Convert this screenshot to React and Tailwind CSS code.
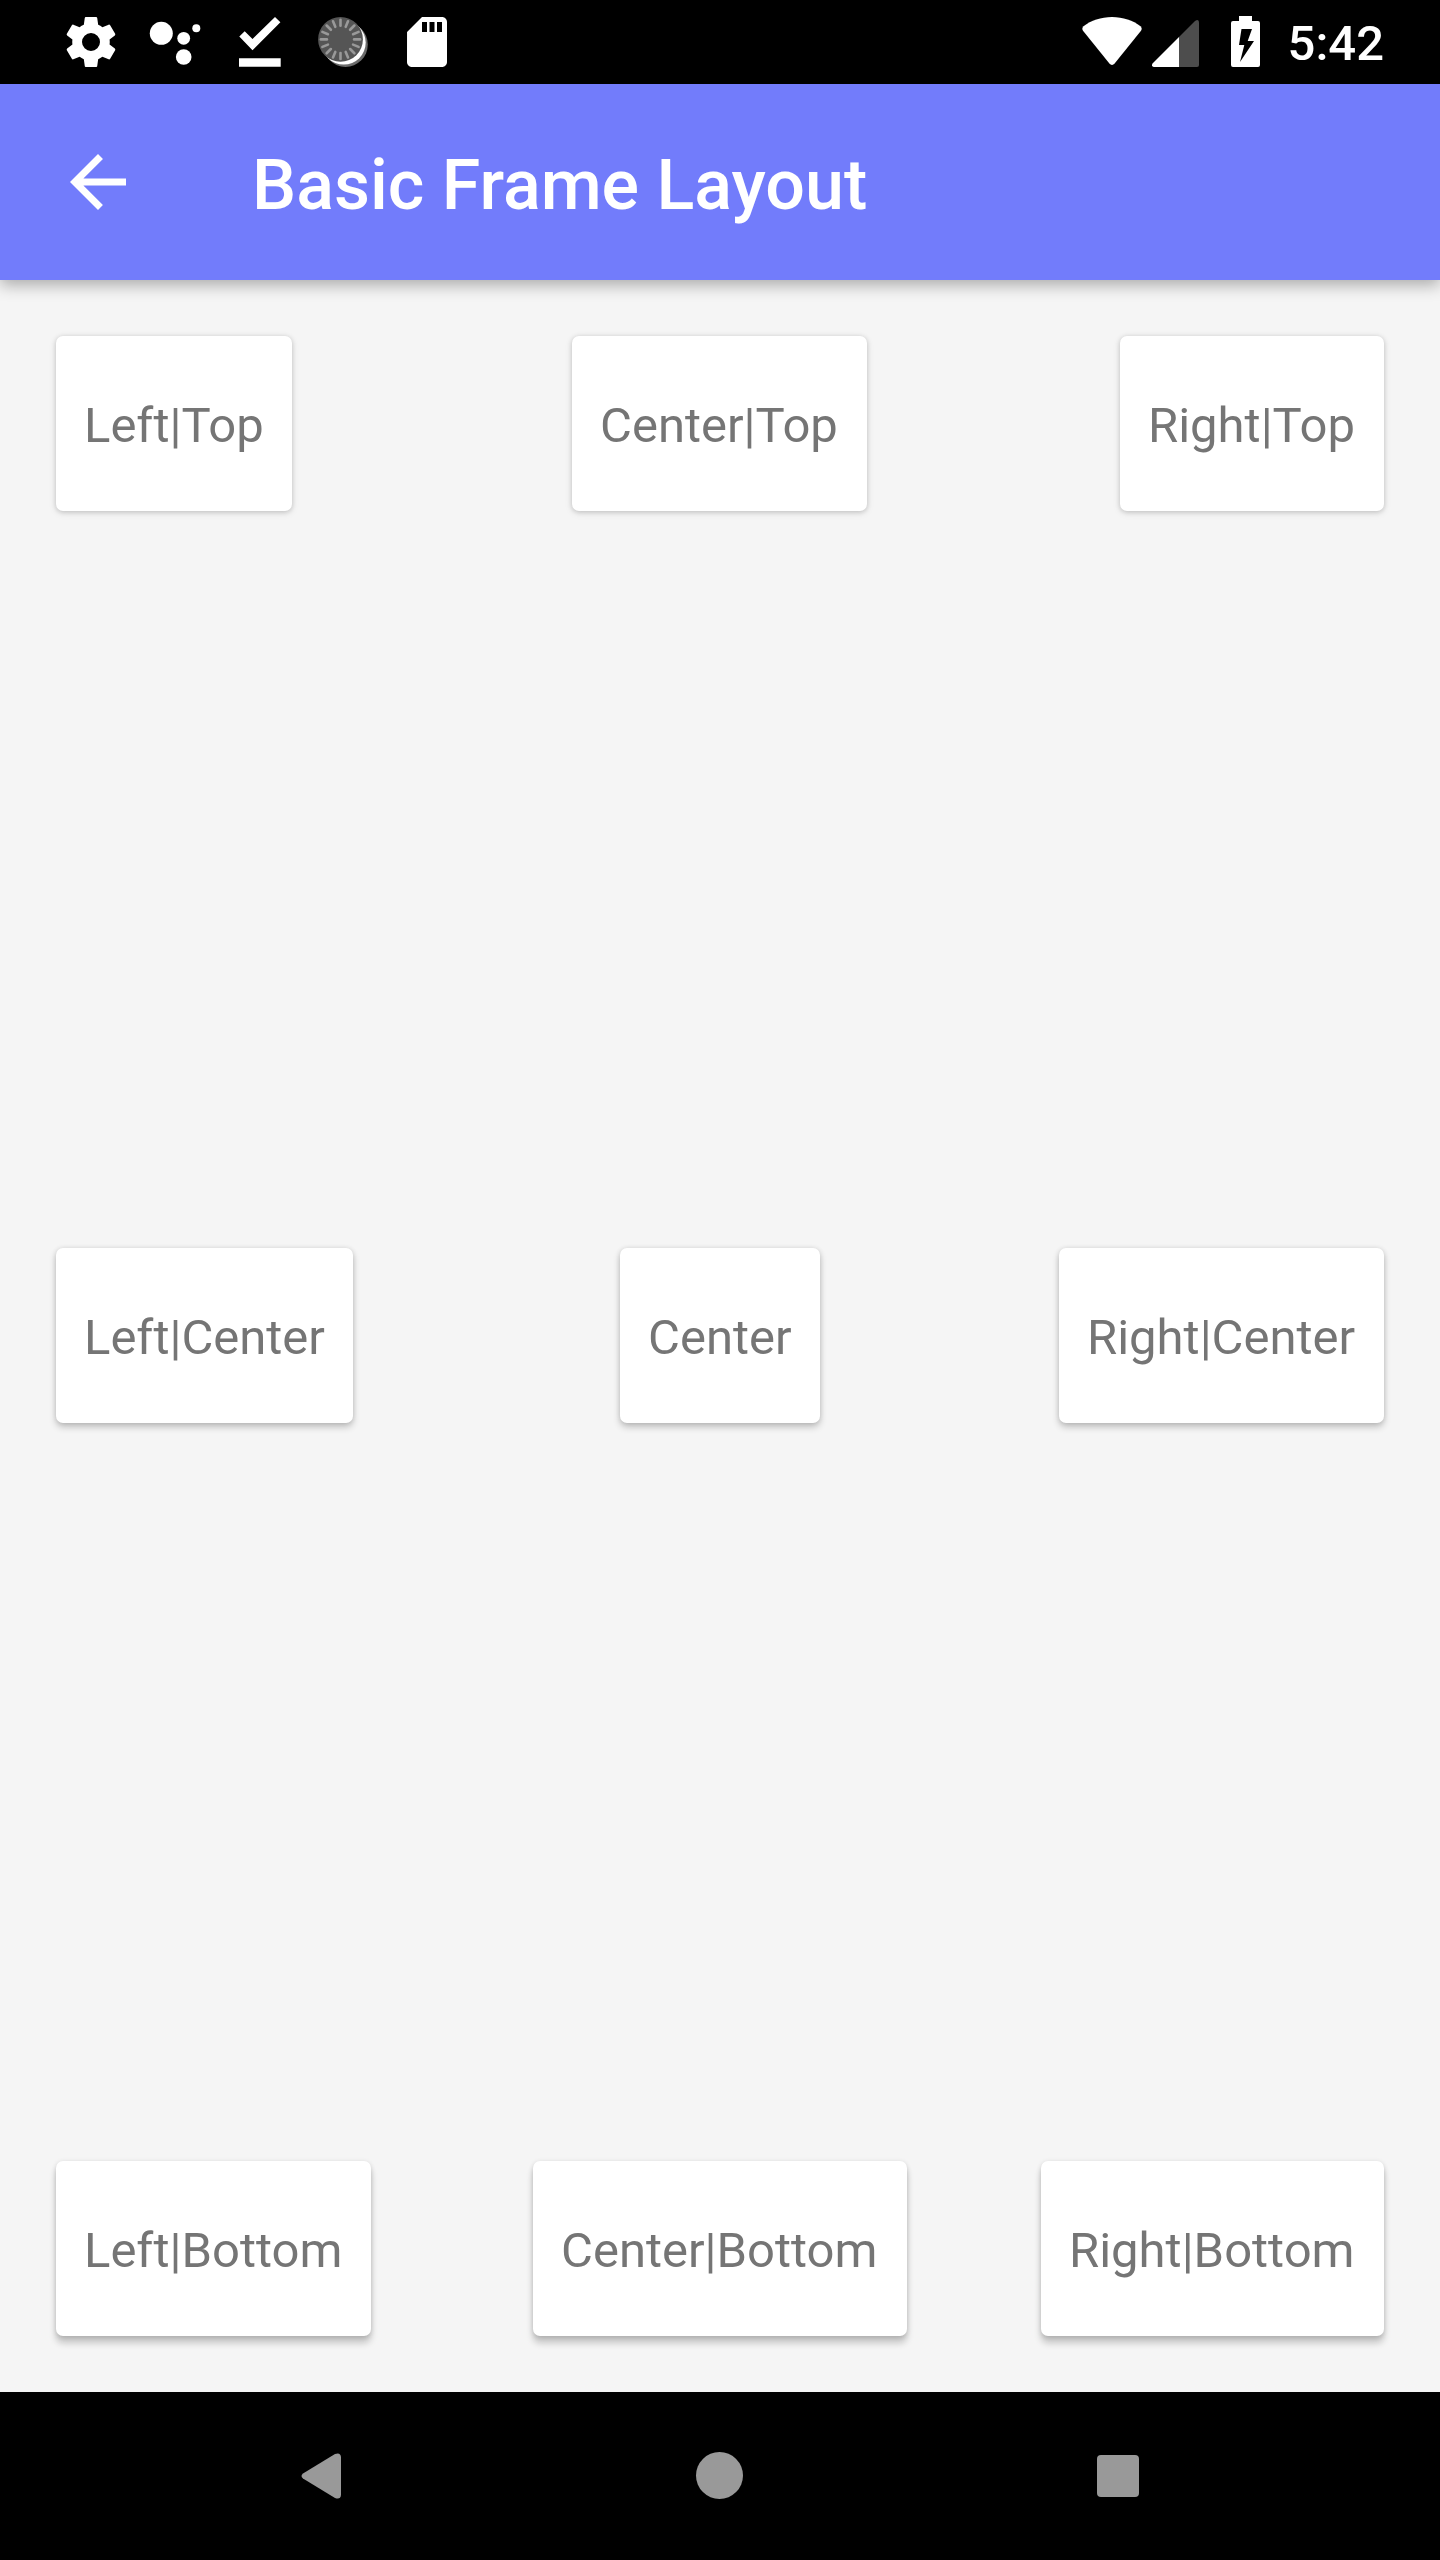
const CARD_SHADOWS = {
  top: 'shadow-[0_1px_5px_rgba(0,0,0,0.18),0_2px_8px_rgba(0,0,0,0.08)]',
  center: 'shadow-[0_4px_7px_rgba(0,0,0,0.22),0_0_5px_rgba(0,0,0,0.1)]',
  bottom: 'shadow-[0_7px_7px_rgba(0,0,0,0.2),0_1px_5px_rgba(0,0,0,0.14)]',
};

function Card({ label, width, level }) {
  return (
    <div
      className={`h-[175px] rounded-[7px] bg-white pl-[28px] pt-[2px] text-[49px] leading-[175px] whitespace-nowrap text-[#757575] ${width} ${CARD_SHADOWS[level]}`}
    >
      {label}
    </div>
  );
}

function CardRow({ cards, level }) {
  const [left, middle, right] = cards;
  return (
    <div className={`grid grid-cols-[1fr_auto_1fr] ${level === 'center' ? '-mt-px' : ''}`}>
      <div className="flex justify-start">
        <Card level={level} {...left} />
      </div>
      <Card level={level} {...middle} />
      <div className="flex justify-end">
        <Card level={level} {...right} />
      </div>
    </div>
  );
}

const ROWS = [
  {
    level: 'top',
    cards: [
      { label: 'Left|Top', width: 'w-[236px]' },
      { label: 'Center|Top', width: 'mr-px w-[295px]' },
      { label: 'Right|Top', width: 'w-[264px]' },
    ],
  },
  {
    level: 'center',
    cards: [
      { label: 'Left|Center', width: 'w-[297px]' },
      { label: 'Center', width: 'w-[200px]' },
      { label: 'Right|Center', width: 'w-[325px]' },
    ],
  },
  {
    level: 'bottom',
    cards: [
      { label: 'Left|Bottom', width: 'w-[315px]' },
      { label: 'Center|Bottom', width: 'w-[374px]' },
      { label: 'Right|Bottom', width: 'w-[343px]' },
    ],
  },
];

function SettingsIcon() {
  return (
    <svg className="size-[60px]" viewBox="0 0 24 24" fill="#fff">
      <path d="M19.43 12.98c.04-.32.07-.64.07-.98s-.03-.66-.07-.98l2.11-1.65c.19-.15.24-.42.12-.64l-2-3.46c-.12-.22-.39-.3-.61-.22l-2.49 1c-.52-.4-1.08-.73-1.69-.98l-.38-2.65A.488.488 0 0 0 14 2h-4c-.25 0-.46.18-.49.42l-.38 2.65c-.61.25-1.17.59-1.69.98l-2.49-1c-.23-.09-.49 0-.61.22l-2 3.46c-.13.22-.07.49.12.64l2.11 1.65c-.04.32-.07.65-.07.98s.03.66.07.98l-2.11 1.65c-.19.15-.24.42-.12.64l2 3.46c.12.22.39.3.61.22l2.49-1c.52.4 1.08.73 1.69.98l.38 2.65c.03.24.24.42.49.42h4c.25 0 .46-.18.49-.42l.38-2.65c.61-.25 1.17-.59 1.69-.98l2.49 1c.23.09.49 0 .61-.22l2-3.46c.12-.22.07-.49-.12-.64l-2.11-1.65zM12 15.6a3.6 3.6 0 1 1 0-7.2 3.6 3.6 0 0 1 0 7.2z" />
    </svg>
  );
}

function AssistantIcon() {
  return (
    <svg className="size-[60px]" viewBox="0 0 60 60" fill="#fff">
      <circle cx="16.3" cy="21.3" r="11.5" />
      <circle cx="38.7" cy="26.3" r="6.4" />
      <circle cx="51.3" cy="16.3" r="4" />
      <circle cx="38.7" cy="45" r="7.8" />
    </svg>
  );
}

function DoneIcon() {
  return (
    <svg className="size-[60px]" viewBox="0 0 60 60" fill="#fff">
      <path d="M10.300 24.600 15.700 19.200 23.500 27 46 5 51.400 10.300 23.500 38.200Z" />
      <path d="M10 46.200h41.700v8.500H10z" />
    </svg>
  );
}

const TICKS = Array.from({ length: 16 }, (_, i) => i * 22.5);

function DialIcon() {
  return (
    <svg className="size-[60px]" viewBox="0 0 60 60">
      <circle cx="32.5" cy="32.6" r="22.3" fill="#6b6b6b" />
      <circle cx="30.7" cy="30.6" r="22" fill="#fff" />
      <circle cx="27.5" cy="27.4" r="22.4" fill="#555" />
      {TICKS.map((angle) => (
        <path
          key={angle}
          d="M27.5 7.8v6"
          stroke="#999"
          strokeWidth="2.6"
          strokeLinecap="round"
          transform={`rotate(${angle} 27.5 27.4)`}
        />
      ))}
    </svg>
  );
}

function SdCardIcon() {
  return (
    <svg className="size-[60px]" viewBox="0 0 24 24" fill="#fff">
      <path d="M18 2h-8L4.02 8 4 20c0 1.1.9 2 2 2h12c1.1 0 2-.9 2-2V4c0-1.100-.9-2-2-2zm-6 6h-2V4h2v4zm3 0h-2V4h2v4zm3 0h-2V4h2v4z" />
    </svg>
  );
}

function WifiIcon() {
  return (
    <svg className="h-[84px] w-[60px]" viewBox="0 0 60 84" fill="#fff">
      <path d="M30 17C19 17 9 20.500 1.500 26.200Q-.7 28.300 1.200 31L27.200 63.300Q30 66.600 32.800 63.300L58.800 31Q60.700 28.300 58.500 26.200C51 20.500 41 17 30 17Z" />
    </svg>
  );
}

function SignalIcon() {
  return (
    <svg className="ml-[10px] h-[84px] w-[47px]" viewBox="0 0 47 84">
      <path d="M27 37 43 20.900Q47 18.500 47 22.500V65Q47 67 45 67H27Z" fill="#4d4d4d" />
      <path d="M27 37V67H1.800Q-1 66.500.5 63.500Z" fill="#fff" />
    </svg>
  );
}

function BatteryIcon() {
  return (
    <svg className="ml-[32px] h-[84px] w-[29px]" viewBox="0 0 29 84">
      <path d="M8 16h13v5h6q2 0 2 2v42q0 2-2 2H2q-2 0-2-2V23q0-2 2-2h6Z" fill="#fff" />
      <path d="M10.500 29H21L16.700 41H23L9 62 13.300 45H8Z" fill="#000" />
    </svg>
  );
}

function StatusBar() {
  return (
    <div className="flex h-[84px] items-center justify-between bg-black pr-[56px] pl-[61px]">
      <div className="flex gap-[24px]">
        <SettingsIcon />
        <AssistantIcon />
        <DoneIcon />
        <DialIcon />
        <SdCardIcon />
      </div>
      <div className="flex items-center">
        <WifiIcon />
        <SignalIcon />
        <BatteryIcon />
        <span className="ml-[28px] pt-[4px] text-[49px] leading-[80px] font-medium text-white">5:42</span>
      </div>
    </div>
  );
}

function AppBar() {
  return (
    <header className="z-10 flex h-[196px] items-center bg-[#727cfb] pl-[56px] text-white shadow-[0_5px_15px_rgba(0,0,0,0.31)]">
      <svg className="size-[84px]" viewBox="0 0 24 24" fill="#fff">
        <path d="M20 11H7.830l5.590-5.590L12 4l-8 8 8 8 1.410-1.410L7.830 13H20v-2z" />
      </svg>
      <h1 className="ml-[112px] pt-[6px] text-[70px] leading-[82px] font-medium">Basic Frame Layout</h1>
    </header>
  );
}

function NavigationBar() {
  return (
    <nav className="flex h-[168px] items-center bg-black pl-[301px]">
      <svg className="h-[46px] w-[40px]" viewBox="0 0 40 46" fill="#999">
        <path d="M34 1 2 20.500Q-1 23 2 25.500L34 45Q39.500 47 40 42V4Q39.500-1 34 1Z" />
      </svg>
      <div className="-mt-px ml-[355px] size-[47px] rounded-full bg-[#999]" />
      <div className="ml-[354px] size-[42px] rounded-[4px] bg-[#999]" />
    </nav>
  );
}

export default function App() {
  return (
    <div className="flex h-[2560px] w-[1440px] flex-col font-[Roboto,sans-serif]">
      <StatusBar />
      <AppBar />
      <main className="flex flex-1 flex-col justify-between bg-[#f5f5f5] p-[56px]">
        {ROWS.map((row) => (
          <CardRow key={row.level} {...row} />
        ))}
      </main>
      <NavigationBar />
    </div>
  );
}
